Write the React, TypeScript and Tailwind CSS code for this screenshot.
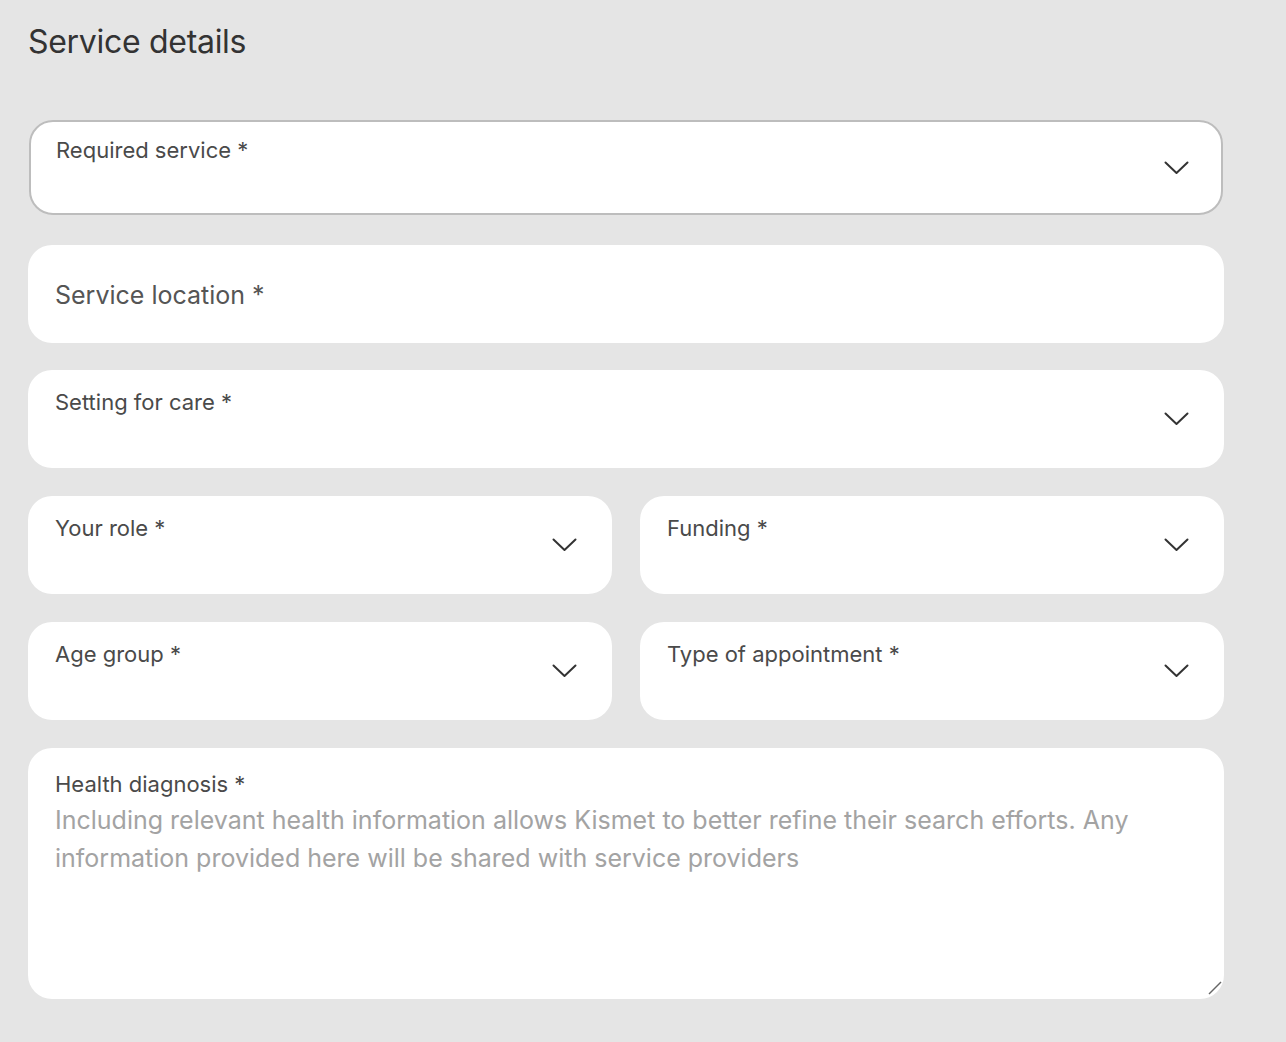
const FONT = { fontFamily: "Inter, 'Open Sans', sans-serif" };

function Chevron({ inset }: { inset?: boolean }) {
  return (
    <svg
      className={`absolute top-1/2 -translate-y-1/2 ${inset ? "right-[32px]" : "right-[35px]"}`}
      width="25"
      height="14"
      viewBox="0 0 25 14"
      fill="none"
    >
      <polyline points="1.5,1.5 12.5,12 23.5,1.5" stroke="#333" strokeWidth="2" strokeLinecap="round" strokeLinejoin="round" />
    </svg>
  );
}

function SelectField({ label, focused = false }: { label: string; focused?: boolean }) {
  return (
    <div
      className={
        focused
          ? "relative mx-[1px] mb-[2px] h-[95px] rounded-[24px] border-2 border-[#bdbdbd] bg-white px-[25px] pt-[15px]"
          : "relative h-[98px] rounded-[24px] bg-white px-[27px] pt-[19px]"
      }
    >
      <span className="block text-[22px] leading-[27px] text-[#4a4a4a]">{label}</span>
      <Chevron inset={focused} />
    </div>
  );
}

export default function App() {
  return (
    <div className="min-h-[1042px] bg-[#e5e5e5] px-[28px] pt-[22px]" style={FONT}>
      <h2 className="text-[32px] leading-[40px] text-[#333] tracking-[-0.3px]">Service details</h2>

      <div className="mt-[58px] flex w-[1196px] flex-col gap-[28px]">
        <SelectField label="Required service *" focused />

        <div className="-mb-[1px] flex h-[98px] items-center rounded-[24px] bg-white px-[27px] pt-[3px]">
          <span className="text-[25px] text-[#555]">Service location *</span>
        </div>

        <SelectField label="Setting for care *" />

        <div className="grid grid-cols-2 gap-[28px]">
          <SelectField label="Your role *" />
          <SelectField label="Funding *" />
        </div>

        <div className="grid grid-cols-2 gap-[28px]">
          <SelectField label="Age group *" />
          <SelectField label="Type of appointment *" />
        </div>

        <div className="relative flex h-[251px] flex-col rounded-[24px] bg-white px-[27px] pt-[23px]">
          <span className="block text-[22px] leading-[27px] text-[#4a4a4a]">Health diagnosis *</span>
          <textarea
            className="mt-[3px] flex-1 resize-none bg-transparent text-[25px] leading-[38px] text-[#333] outline-none placeholder:text-[#a3a3a3]"
            placeholder="Including relevant health information allows Kismet to better refine their search efforts. Any information provided here will be shared with service providers"
          />
          <svg
            className="absolute bottom-[4px] right-[2px]"
            width="14"
            height="14"
            viewBox="0 0 14 14"
          >
            <line x1="1" y1="13" x2="13" y2="1" stroke="#666" strokeWidth="1.5" />
          </svg>
        </div>
      </div>
    </div>
  );
}
